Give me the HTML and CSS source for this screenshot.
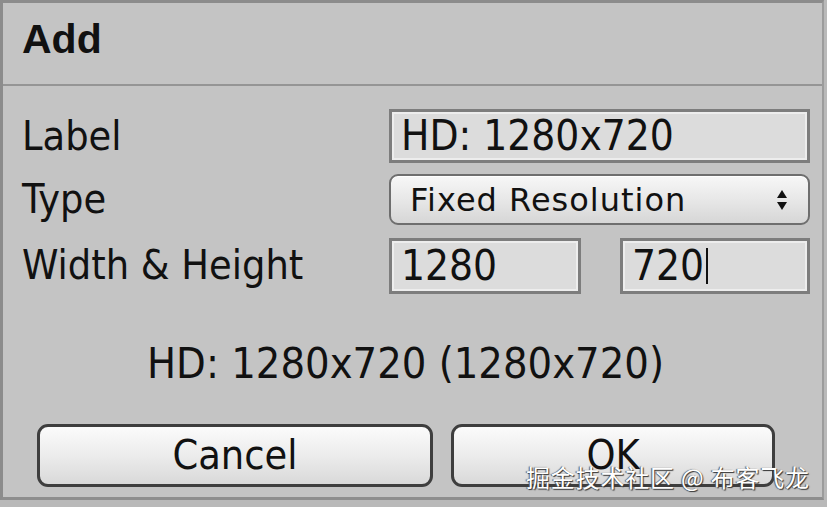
FILE: index.html
```html
<!DOCTYPE html>
<html>
<head>
<meta charset="utf-8">
<link rel="stylesheet" href="styles.css">
</head>
<body>
<div class="dialog">
  <div class="header"><h1 class="title">Add</h1></div>
  <div class="form">
    <div class="label">Label</div>
    <div class="field"><span class="value">HD: 1280x720</span></div>
    <div class="label">Type</div>
    <div class="select">
      <span class="select-text">Fixed Resolution</span>
      <svg class="arrows" width="12" height="22" viewBox="0 0 12 22"><path d="M6 1 L11 9 L1 9 Z" fill="#111"/><path d="M6 21 L11 13 L1 13 Z" fill="#111"/></svg>
    </div>
    <div class="label row3">Width &amp; Height</div>
    <div class="pair row3">
      <div class="field"><span class="value">1280</span></div>
      <div class="field"><span class="value">720</span><span class="caret"></span></div>
    </div>
  </div>
  <div class="summary">HD: 1280x720 (1280x720)</div>
  <div class="buttons">
    <div class="button">Cancel</div>
    <div class="button">OK</div>
  </div>
</div>
<div class="watermark">掘金技术社区 @ 布客飞龙</div>
</body>
</html>
```
FILE: styles.css
```css
html, body {
  margin: 0;
  padding: 0;
}
body {
  width: 827px;
  height: 507px;
  overflow: hidden;
  background: #b9b9b9;
  position: relative;
  font-family: "DejaVu Sans Condensed", "DejaVu Sans", sans-serif;
  font-stretch: condensed;
  color: #111;
}
.dialog {
  box-sizing: border-box;
  width: 824px;
  height: 500px;
  background: #c4c4c4;
  border-top: 3px solid #8c8c8c;
  border-left: 3px solid #8c8c8c;
  border-right: 2px solid #9c9c9c;
  border-bottom: 3px solid #8e8e8e;
}
.header {
  height: 83px;
  box-sizing: border-box;
  border-bottom: 2px solid #959595;
  padding: 16px 0 0 19px;
}
.title {
  margin: 0;
  font-family: "Liberation Sans", Arial, sans-serif;
  font-stretch: normal;
  font-weight: bold;
  font-size: 41px;
  line-height: 41px;
  color: #111;
}
.form {
  display: grid;
  grid-template-columns: 367px 421px;
  grid-template-rows: 54px 51px 56px;
  row-gap: 11px;
  align-items: center;
  padding: 23px 0 0 19px;
}
.row3 { margin-top: 3px; }
.label {
  font-size: 41px;
  line-height: 1;
}
.field {
  box-sizing: border-box;
  height: 100%;
  border: 3px solid #7d7d7d;
  box-shadow: inset 0 0 0 2px #ededed;
  background: #dcdcdc;
  display: flex;
  align-items: center;
  padding-left: 9px;
}
.form > .field { height: 54px; }
.value {
  font-size: 42px;
  line-height: 1;
}
.caret {
  display: inline-block;
  width: 2px;
  height: 36px;
  background: #111;
  margin-left: 2px;
}
.select {
  box-sizing: border-box;
  height: 51px;
  border: 2px solid #6e6e6e;
  border-radius: 9px;
  background: linear-gradient(#f7f7f7, #e6e6e6 55%, #d6d6d6);
  box-shadow: inset 0 1px 0 #ffffff;
  display: flex;
  align-items: center;
  justify-content: space-between;
  padding: 0 20px 0 19px;
}
.select-text {
  font-family: "DejaVu Sans", sans-serif;
  font-stretch: normal;
  font-size: 32px;
  line-height: 1;
  letter-spacing: 1px;
}
.arrows { display: block; }
.pair {
  display: grid;
  grid-template-columns: 192px 190px;
  column-gap: 39px;
  height: 56px;
}
.summary {
  text-align: center;
  font-size: 43px;
  line-height: 1;
  margin-top: 50px;
  padding-right: 14px;
}
.buttons {
  display: grid;
  grid-template-columns: 396px 324px;
  column-gap: 18px;
  padding-left: 34px;
  margin-top: 39px;
}
.button {
  box-sizing: border-box;
  height: 63px;
  border: 3px solid #3e3e3e;
  border-radius: 11px;
  background: linear-gradient(#fbfbfb, #ececec 50%, #d9d9d9);
  display: flex;
  align-items: center;
  justify-content: center;
  font-size: 41px;
  line-height: 1;
}
.watermark {
  position: absolute;
  left: 526px;
  top: 462px;
  font-family: "Noto Sans CJK SC", sans-serif;
  font-stretch: normal;
  font-size: 24px;
  line-height: 30px;
  color: #ffffff;
  text-shadow: 1px 1px 1px #333, -1px 0 1px #555;
  letter-spacing: 0.8px;
}
```
